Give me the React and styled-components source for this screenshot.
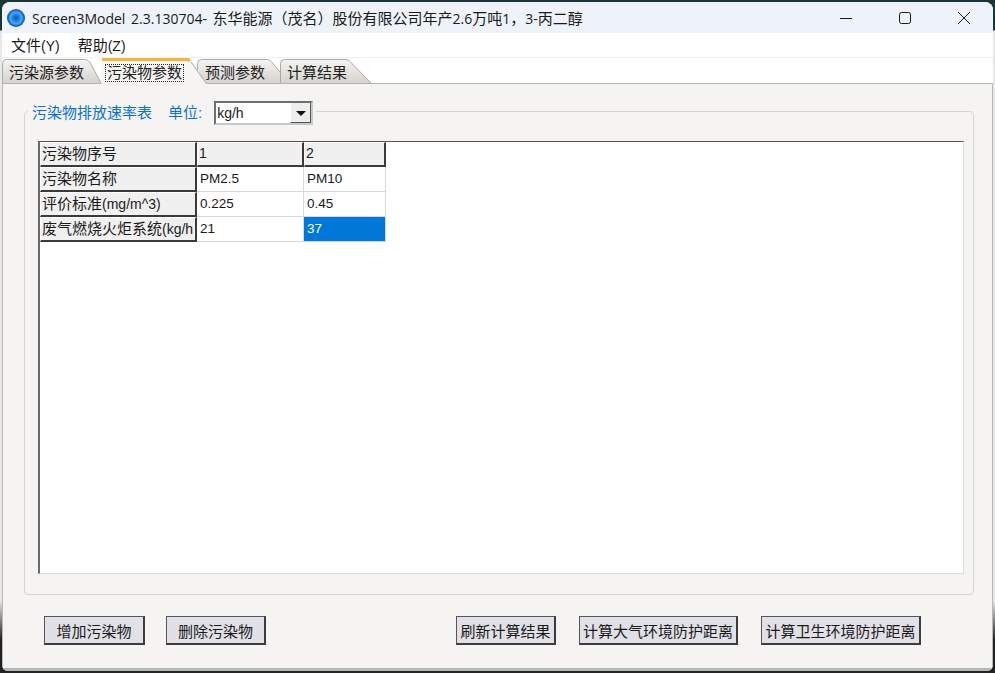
import React from "react";
import styled, { createGlobalStyle } from "styled-components";

const Global = createGlobalStyle`
  html, body { margin: 0; padding: 0; height: 100%; background: #1d3438; overflow: hidden; }
  #root { height: 100%; }
  * { box-sizing: border-box; }
`;
const FONT = `"Liberation Sans", "Noto Sans CJK SC", sans-serif`;

const Desktop = styled.div`
  height: 673px;
  padding: 2px;
  font-family: ${FONT};
  color: #1a1a1a;
  background: linear-gradient(
    to bottom,
    #1d3438 0,
    #1d3438 30px,
    #e8e8e8 31px,
    #e8e8e8 600px,
    #222 640px,
    #222 100%
  );
`;
const Window = styled.div`
  height: 669px;
  display: flex;
  flex-direction: column;
  border-radius: 8px 8px 6px 6px;
  overflow: hidden;
  background: #f5f4f2;
`;
const TitleBar = styled.div`
  height: 31px;
  flex: none;
  background: #eef2f9;
  display: flex;
  align-items: center;
  padding-left: 5px;
`;
const AppIcon = styled.svg`
  width: 18px;
  height: 18px;
  flex: none;
`;
const Title = styled.div`
  margin-left: 7px;
  font: 14px "Open Sans", "Noto Sans CJK SC", sans-serif;
  word-spacing: 2px;
  color: #1a1a1a;
  white-space: nowrap;
  flex: 1;
`;
const Han = styled.span`
  font-size: 15px;
`;
const WinButton = styled.div`
  width: 59px;
  height: 31px;
  display: flex;
  align-items: center;
  justify-content: center;
`;
const MenuBar = styled.div`
  height: 25px;
  flex: none;
  background: #fff;
  display: flex;
  align-items: center;
  padding: 0 0 1px 9px;
  gap: 18px;
  font-size: 14px;
  border-bottom: 1px solid #f0f0f0;
`;
const TabStrip = styled.div`
  height: 26px;
  flex: none;
  background: #fff;
  display: flex;
  align-items: flex-start;
  border-bottom: 1px solid #b0b4b2;
`;
const TabShape = styled.div`
  position: relative;
  height: ${(p) => (p.$active ? 26 : 24)}px;
  margin-top: ${(p) => (p.$active ? 0 : 1)}px;
  width: ${(p) => p.$w}px;
  flex: none;
  font-size: 15px;
  color: #222;
  padding-left: ${(p) => p.$pad}px;
  white-space: nowrap;
  z-index: ${(p) => p.$z};
`;
const TabBg = styled.svg`
  position: absolute;
  left: 0;
  top: 0;
  z-index: -1;
  overflow: visible;
`;
const TabLabel = styled.span`
  outline: ${(p) => (p.$active ? "1px dotted #222" : "none")};
  outline-offset: -1px;
  display: block;
  width: fit-content;
  padding: 0 ${(p) => (p.$active ? 2 : 0)}px;
  line-height: 18px;
  height: 18px;
  margin-top: ${(p) => (p.$active ? 6 : 5)}px;
`;
const Page = styled.div`
  flex: 1;
  display: flex;
  flex-direction: column;
  padding: 17px 0 0 21px;
  border-left: 1px solid #b8b8b8;
  border-right: 1px solid #b8b8b8;
  border-bottom: 3px solid #b4b8b6;
`;
const Group = styled.fieldset`
  margin: 0;
  width: 950px;
  height: 494px;
  flex: none;
  border: 1px solid #d4d4d2;
  border-radius: 4px;
  padding: 20px 9px 20px 13px;
  min-width: 0;
  display: flex;
  flex-direction: column;
`;
const Legend = styled.legend`
  display: flex;
  align-items: flex-start;
  margin-left: -10px;
  padding: 0 3px 0 4px;
  height: 20px;
  font-size: 15px;
  line-height: 24px;
  color: #0a6fd6;
`;
const UnitLabel = styled.span`
  margin-left: 16px;
  margin-right: 12px;
`;
const Combo = styled.div`
  width: 99px;
  height: 24px;
  display: flex;
  border: 2px solid #6e6e6e;
  border-right-color: #c8c8c8;
  border-bottom-color: #c8c8c8;
  background: #fff;
  color: #1a1a1a;
  font-size: 14px;
  align-items: stretch;
`;
const ComboValue = styled.div`
  flex: 1;
  padding-left: 1px;
  line-height: 20px;
`;
const ComboArrow = styled.div`
  width: 21px;
  background: #eeeeec;
  display: flex;
  align-items: center;
  justify-content: center;
  border-right: 1px solid #555;
  border-bottom: 1px solid #555;
  border-left: 1px solid #fff;
  &::after {
    content: "";
    border: 5px solid transparent;
    border-top: 5px solid #111;
    border-bottom: 0;
    margin-top: 2px;
  }
`;
const Well = styled.div`
  width: 926px;
  height: 433px;
  background: #fff;
  border-top: 1px solid #555;
  border-left: 2px solid #6a6a6a;
  border-right: 1px solid #dcdcdc;
  border-bottom: 1px solid #dcdcdc;
  flex: none;
`;
const Sheet = styled.div`
  display: grid;
  grid-template-columns: 157px 107px 82px;
  grid-auto-rows: 25px;
  width: 346px;
  font-size: 13.5px;
`;
const HeadCell = styled.div`
  background: #f0f0f0;
  border-right: 2px solid #3a3a3a;
  border-bottom: 2px solid #3a3a3a;
  border-top: 1px solid #fff;
  border-left: 1px solid #fff;
  padding-left: 1px;
  font-size: 14px;
  line-height: 21px;
  white-space: nowrap;
  overflow: hidden;
`;
const DataCell = styled.div`
  background: ${(p) => (p.$selected ? "#0078d7" : "#fff")};
  color: ${(p) => (p.$selected ? "#fff" : "#1a1a1a")};
  border-right: 1px solid #d8d8d8;
  border-bottom: 1px solid #d8d8d8;
  padding-left: 3px;
  line-height: 23px;
`;
const Actions = styled.div`
  display: flex;
  align-items: flex-start;
  margin-top: 21px;
  padding-left: 20px;
`;
const ActionButton = styled.button`
  height: 29px;
  width: ${(p) => p.$w}px;
  margin-right: ${(p) => p.$gap}px;
  background: #e0e0e6;
  border: 1px solid #555;
  border-right: 2px solid #3c3c3c;
  border-bottom: 2px solid #3c3c3c;
  padding: 0;
  font-family: ${FONT};
  font-size: 15px;
  color: #1a1a1a;
  white-space: nowrap;
`;

const tabs = [
  { t: "污染源参数", w: 99, top: 83, end: 99, pad: 7, z: 1 },
  { t: "污染物参数", w: 96, top: 87, end: 105, pad: 4, z: 5, active: true },
  { t: "预测参数", w: 83, top: 70, end: 92, pad: 8, z: 2 },
  { t: "计算结果", w: 92, top: 66, end: 91, pad: 7, z: 3 },
];

function Tab({ t, w, top, end, pad, z, active }) {
  const h = active ? 26 : 24;
  const y0 = active ? 1.5 : 0.5;
  const id = `tabfill${z}`;
  return (
    <TabShape $w={w} $pad={pad} $z={z} $active={active}>
      <TabBg width={w} height={h}>
        <defs>
          <linearGradient id={id} x1="0" y1="0" x2="0" y2="1">
            <stop offset="0" stopColor={active ? "#f8f7f5" : "#f5f4f2"} />
            <stop offset="1" stopColor={active ? "#f5f4f2" : "#d6d2cd"} />
          </linearGradient>
        </defs>
        <path
          d={`M0.5 ${h} V${y0 + 4} Q0.5 ${y0} 4.5 ${y0} H${top} Q${top + 3} ${y0} ${top + 5} ${y0 + 3} L${end} ${h}`}
          fill={`url(#${id})`}
          stroke={active ? "none" : "#a8aaa8"}
        />
        {active && <path d={`M1 1.5 H${top} L${top + 2} 3`} stroke="#f2b63c" strokeWidth="3" fill="none" />}
        {active && <path d={`M${top + 3} 4 L${end} ${h - 1}`} stroke="#a8aaa8" fill="none" />}
      </TabBg>
      <TabLabel $active={active}>{t}</TabLabel>
    </TabShape>
  );
}

export default function App() {
  return (
    <Desktop>
      <Global />
      <Window>
        <TitleBar>
          <AppIcon viewBox="0 0 18 18">
            <defs>
              <radialGradient id="appIconFill">
                <stop offset="0" stopColor="#0c5cb4" />
                <stop offset="0.3" stopColor="#1a7ad8" />
                <stop offset="0.65" stopColor="#4aa8f0" />
                <stop offset="0.85" stopColor="#1670cc" />
                <stop offset="1" stopColor="#0b4f9c" />
              </radialGradient>
            </defs>
            <circle cx="9" cy="9" r="9" fill="url(#appIconFill)" />
          </AppIcon>
          <Title>
            Screen3Model 2.3.130704- <Han>东华能源（茂名）股份有限公司年产</Han>2.6<Han>万吨</Han>1<Han>，</Han>3-<Han>丙二醇</Han>
          </Title>
          <WinButton>
            <svg width="14" height="14"><path d="M1 7.5H13" stroke="#1a1a1a" /></svg>
          </WinButton>
          <WinButton>
            <svg width="14" height="14"><rect x="1.5" y="1.5" width="11" height="11" rx="2" fill="none" stroke="#1a1a1a" /></svg>
          </WinButton>
          <WinButton>
            <svg width="14" height="14"><path d="M1 1L13 13M13 1L1 13" stroke="#1a1a1a" /></svg>
          </WinButton>
        </TitleBar>
        <MenuBar>
          <span><Han>文件</Han>(Y)</span>
          <span><Han>帮助</Han>(Z)</span>
        </MenuBar>
        <TabStrip>
          {tabs.map((x) => <Tab key={x.t} {...x} />)}
        </TabStrip>
        <Page>
          <Group>
            <Legend>
              污染物排放速率表
              <UnitLabel>单位:</UnitLabel>
              <Combo>
                <ComboValue>kg/h</ComboValue>
                <ComboArrow />
              </Combo>
            </Legend>
            <Well>
              <Sheet>
                <HeadCell><Han>污染物序号</Han></HeadCell>
                <HeadCell>1</HeadCell>
                <HeadCell>2</HeadCell>
                <HeadCell><Han>污染物名称</Han></HeadCell>
                <DataCell>PM2.5</DataCell>
                <DataCell>PM10</DataCell>
                <HeadCell><Han>评价标准</Han>(mg/m^3)</HeadCell>
                <DataCell>0.225</DataCell>
                <DataCell>0.45</DataCell>
                <HeadCell><Han>废气燃烧火炬系统</Han>(kg/h</HeadCell>
                <DataCell>21</DataCell>
                <DataCell $selected>37</DataCell>
              </Sheet>
            </Well>
          </Group>
          <Actions>
            <ActionButton $w={101} $gap={21}>增加污染物</ActionButton>
            <ActionButton $w={100} $gap={190}>删除污染物</ActionButton>
            <ActionButton $w={100} $gap={23}>刷新计算结果</ActionButton>
            <ActionButton $w={159} $gap={23}>计算大气环境防护距离</ActionButton>
            <ActionButton $w={160} $gap={0}>计算卫生环境防护距离</ActionButton>
          </Actions>
        </Page>
      </Window>
    </Desktop>
  );
}
